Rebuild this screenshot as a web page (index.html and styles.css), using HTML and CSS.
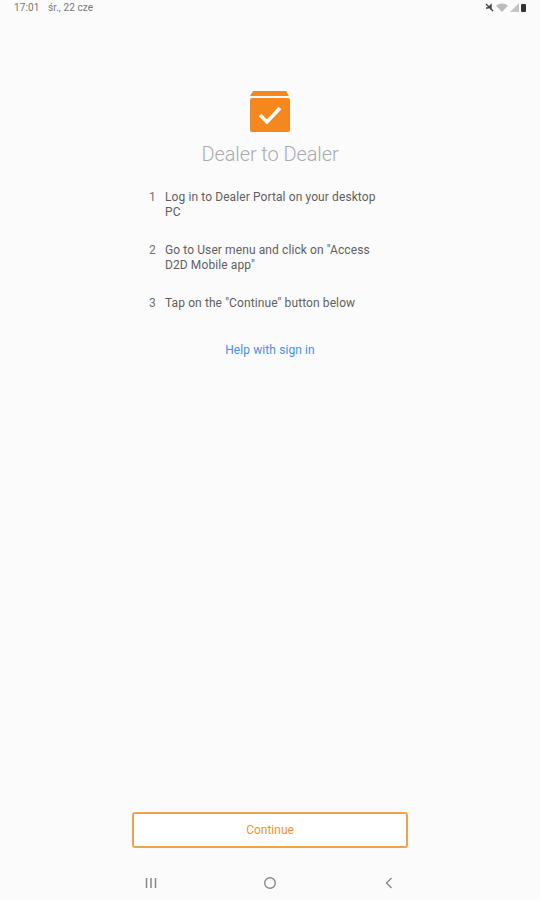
FILE: index.html
```html
<!DOCTYPE html>
<html>
<head>
    <title>Dealer to Dealer</title>
    <link rel="stylesheet" href="styles.css">
</head>
<body>
    <div class="screen">
        <div class="status-bar">
            <div class="status-time">17:01 <span class="status-date">śr., 22 cze</span></div>
            <div class="status-icons">
                <svg width="9" height="9" viewBox="0 0 9 9"><path d="M1 1l7 7M1 5h2l3-3v5" fill="none" stroke="#444" stroke-width="1.4"/></svg>
                <svg width="12" height="9" viewBox="0 0 12 9"><path d="M0 2.5Q6 -1.5 12 2.5L6 9z" fill="#bbb"/></svg>
                <svg width="9" height="9" viewBox="0 0 9 9"><path d="M9 0v9H0z" fill="#c4c4c4"/></svg>
                <svg width="5" height="8" viewBox="0 0 5 8"><rect width="5" height="8" rx="1" fill="#333"/></svg>
            </div>
        </div>

        <div class="content">
            <svg class="logo" width="42" height="42" viewBox="0 0 42 42">
                <path d="M4 0h33l3 5H1z" fill="#f5871f"/>
                <rect x="1" y="7" width="40" height="34" rx="2" fill="#f5871f"/>
                <path d="M11 24l7 7 13-14" fill="none" stroke="#fff" stroke-width="3.6"/>
            </svg>
            <h1 class="title">Dealer to Dealer</h1>

            <ol class="steps">
                <li class="step"><span class="step-num">1</span><span>Log in to Dealer Portal on your desktop PC</span></li>
                <li class="step"><span class="step-num">2</span><span>Go to User menu and click on "Access D2D Mobile app"</span></li>
                <li class="step"><span class="step-num">3</span><span>Tap on the "Continue" button below</span></li>
            </ol>

            <a class="help-link" href="#">Help with sign in</a>
        </div>

        <div class="footer">
            <button class="btn">Continue</button>
            <div class="nav-bar">
                <svg width="14" height="14" viewBox="0 0 14 14"><path d="M2.500 2v10M7 2v10M11.500 2v10" stroke="#888" stroke-width="1.5"/></svg>
                <svg width="14" height="14" viewBox="0 0 14 14"><circle cx="7" cy="7" r="5.300" fill="none" stroke="#888" stroke-width="1.4"/></svg>
                <svg width="14" height="14" viewBox="0 0 14 14"><path d="M9.500 2L4.500 7l5 5" fill="none" stroke="#888" stroke-width="1.400"/></svg>
            </div>
        </div>
    </div>
</body>
</html>
```

FILE: styles.css
```css
html, body {
    margin: 0;
    padding: 0;
}
body {
    font-family: Roboto, "Liberation Sans", sans-serif;
    background-color: #fbfbfb;
}
.screen {
    width: 540px;
    height: 900px;
    display: flex;
    flex-direction: column;
    overflow: hidden;
}
.status-bar {
    display: flex;
    justify-content: space-between;
    align-items: center;
    height: 15px;
    padding: 0 14px;
}
.status-time {
    font-size: 10px;
    letter-spacing: 0.1px;
    color: #777;
}
.status-date {
    margin-left: 6px;
}
.status-icons {
    display: flex;
    align-items: center;
    gap: 2px;
}
.content {
    flex: 1;
    display: flex;
    flex-direction: column;
    align-items: center;
    padding-top: 76px;
}
.logo {
    display: block;
}
.title {
    margin: 9px 0 0;
    font-size: 20px;
    line-height: 24px;
    font-weight: 300;
    letter-spacing: -0.1px;
    color: #a9abae;
}
.steps {
    list-style: none;
    margin: 24px 0 0;
    padding: 0;
    width: 242px;
}
.step {
    display: flex;
    font-size: 12px;
    line-height: 15px;
    letter-spacing: 0.1px;
    color: #5f5f5f;
    margin-bottom: 23px;
}
.step-num {
    flex: none;
    width: 16px;
    color: #707070;
}
.help-link {
    margin-top: 8px;
    font-size: 12px;
    line-height: 16px;
    letter-spacing: 0.1px;
    color: #4a90e2;
    text-decoration: none;
}
.footer {
    display: flex;
    flex-direction: column;
    align-items: center;
}
.btn {
    width: 276px;
    height: 36px;
    padding: 0;
    background-color: #fff;
    color: #f0923a;
    border: 2px solid #f0a24f;
    border-radius: 3px;
    font-family: inherit;
    font-size: 12px;
}
.nav-bar {
    width: 276px;
    height: 52px;
    box-sizing: border-box;
    display: flex;
    justify-content: space-between;
    align-items: flex-start;
    padding: 28px 12px 0;
}
```
